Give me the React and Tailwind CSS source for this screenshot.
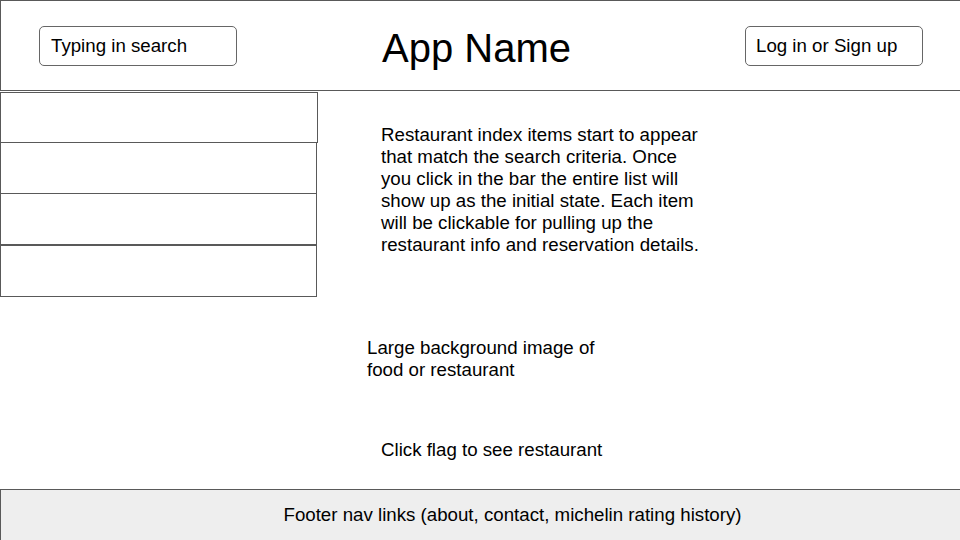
function App() {
  const rows = [
    'w-[318px] h-[51px] border',
    'w-[317px] h-[51px] border-x border-b',
    'w-[317px] h-[51px] border-x border-b',
    'w-[317px] h-[52px] border'
  ]

  return (
    <div className="w-[960px] h-[540px] overflow-hidden bg-white text-black font-['Liberation_Sans',Arial,sans-serif] flex flex-col">

      <header className="w-[1024px] h-[91px] shrink-0 border-t border-b border-l border-[#595959] flex items-center">

        <div className="ml-[38px] w-[198px] h-[40px] border border-[#666666] rounded-[5px] pl-[11px] pt-[2px] flex items-center text-[18.7px]">
          Typing in search
        </div>

        <h1 className="ml-[145px] mt-[4px] text-[40px] leading-none">
          App Name
        </h1>

        <div className="ml-[174px] w-[178px] h-[40px] border border-[#666666] rounded-[5px] pl-[10px] pt-[2px] flex items-center text-[18.7px]">
          Log in or Sign up
        </div>

      </header>

      <main className="flex-1 flex">

        <div className="pt-[1px] flex flex-col">
          {rows.map((cls, i) => (
            <div key={i} className={`${cls} border-[#595959]`} />
          ))}
        </div>

        <div className="ml-[49px] flex flex-col text-[18.7px] leading-[22px]">

          <p className="mt-[33px] ml-[14px] w-[325px]">
            Restaurant index items start to appear that match the search criteria. Once you click in the bar the entire list will show up as the initial state. Each item will be clickable for pulling up the restaurant info and reservation details.
          </p>

          <p className="mt-[81px] w-[240px]">
            Large background image of food or restaurant
          </p>

          <p className="mt-[58px] ml-[14px]">
            Click flag to see restaurant
          </p>

        </div>

      </main>

      <footer className="w-[1024px] h-[51px] shrink-0 bg-[#eeeeee] border-t border-l border-[#595959] flex items-center justify-center text-[18.7px]">
        Footer nav links (about, contact, michelin rating history)
      </footer>

    </div>
  )
}

export default App
